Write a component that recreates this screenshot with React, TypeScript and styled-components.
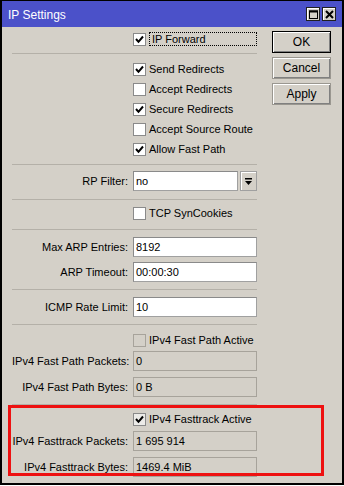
import React from 'react';
import styled, { createGlobalStyle } from 'styled-components';

const Global = createGlobalStyle`
  html, body {
    margin: 0;
    padding: 0;
    background: #ffffff;
  }
  body {
    font-family: "Liberation Sans", Arial, sans-serif;
    font-size: 11px;
    color: #000;
  }
`;

const Window = styled.div`
  position: relative;
  box-sizing: border-box;
  width: 344px;
  height: 485px;
  background: #d4d0c8;
  border: 2px solid #000;
  border-top-width: 1px;
  display: flex;
  flex-direction: column;
`;

const TitleBar = styled.div`
  height: 26px;
  background: #4b51c9;
  display: flex;
  align-items: center;
  padding: 0 6px 0 6px;
`;

const Title = styled.div`
  flex: 1;
  color: #fff;
  font-size: 12px;
  padding-top: 1px;
`;

const TitleButton = styled.div`
  box-sizing: border-box;
  width: 14px;
  height: 14px;
  margin-left: 2px;
  background: #d4d0c8;
  border: 1px solid #202020;
  box-shadow: inset 1px 1px #fff;
  display: flex;
  align-items: center;
  justify-content: center;
`;

const Body = styled.div`
  flex: 1;
  display: flex;
  padding: 0 10px 0 10px;
`;

const Form = styled.div`
  width: 245px;
  display: flex;
  flex-direction: column;
`;

const Section = styled.div<{ $pt: number; $pb: number; $gap?: number }>`
  display: flex;
  flex-direction: column;
  gap: ${p => p.$gap ?? 0}px;
  padding: ${p => p.$pt}px 0 ${p => p.$pb}px;
`;

const Separator = styled.div`
  height: 1px;
  background: #b4b0a8;
`;

const Row = styled.div<{ $h?: number }>`
  display: grid;
  grid-template-columns: 116px 124px;
  column-gap: 5px;
  align-items: center;
  height: ${p => p.$h ?? 20}px;
`;

const Label = styled.div`
  text-align: right;
  white-space: nowrap;
`;

const Field = styled.div<{ $readonly?: boolean }>`
  box-sizing: border-box;
  height: 20px;
  line-height: 18px;
  padding-left: 2px;
  background: ${p => (p.$readonly ? '#d4d0c8' : '#fff')};
  border: 1px solid ${p => (p.$readonly ? '#a7a39b' : '#a0a0a0')};
  ${p => (p.$readonly ? '' : 'border-top-color: #8a8a8a; border-left-color: #8a8a8a;')}
  white-space: nowrap;
`;

const Select = styled.div`
  display: flex;
  gap: 2px;
`;

const SelectButton = styled.div`
  box-sizing: border-box;
  width: 17px;
  height: 20px;
  background: #d4d0c8;
  border: 1px solid #a0a0a0;
  box-shadow: inset 1px 1px #fff;
  display: flex;
  align-items: center;
  justify-content: center;
`;

const Check = styled.label`
  grid-column: 2;
  display: flex;
  align-items: center;
  gap: 3px;
  white-space: nowrap;
`;

const Box = styled.span<{ $disabled?: boolean; $dim?: boolean }>`
  box-sizing: border-box;
  width: 13px;
  height: 13px;
  flex: none;
  background: ${p => (p.$disabled ? '#d4d0c8' : p.$dim ? '#ecebe8' : '#fff')};
  border: 1px solid ${p => (p.$disabled ? '#a7a39b' : '#8a8a8a')};
  display: flex;
  align-items: center;
  justify-content: center;
`;

const Focus = styled.span`
  box-sizing: border-box;
  width: 112px;
  height: 14px;
  line-height: 12px;
  padding-left: 2px;
  border: 1px dotted #000;
`;

const Buttons = styled.div`
  margin-left: 15px;
  padding-top: 4px;
  display: flex;
  flex-direction: column;
  gap: 4px;
`;

const Button = styled.div<{ $default?: boolean }>`
  box-sizing: border-box;
  width: 59px;
  height: 22px;
  display: flex;
  align-items: center;
  justify-content: center;
  font-size: 12px;
  border: 1px solid ${p => (p.$default ? '#000' : '#9a9790')};
  box-shadow: inset 1px 1px #fff, inset -1px -1px #808080;
`;

const Highlight = styled.div`
  position: absolute;
  left: 6px;
  top: 404px;
  width: 316px;
  height: 71px;
  box-sizing: border-box;
  border: 3px solid #ee1111;
  pointer-events: none;
`;

const Tick = () => (
  <svg width="9" height="9" viewBox="0 0 9 9">
    <polyline points="1,4 3.5,6.8 8,1.5" fill="none" stroke="#000" strokeWidth="2" />
  </svg>
);

const CheckRow: React.FC<{ label: string; checked?: boolean; disabled?: boolean; dim?: boolean }> = ({
  label,
  checked,
  disabled,
  dim,
}) => (
  <Row>
    <Check>
      <Box $disabled={disabled} $dim={dim}>{checked && <Tick />}</Box>
      {label}
    </Check>
  </Row>
);

const FieldRow: React.FC<{ label: string; value: string; readonly?: boolean }> = ({ label, value, readonly }) => (
  <Row>
    <Label>{label}</Label>
    <Field $readonly={readonly}>{value}</Field>
  </Row>
);

export default function App() {
  return (
    <>
      <Global />
      <Window>
        <TitleBar>
          <Title>IP Settings</Title>
          <TitleButton>
            <svg width="9" height="9" viewBox="0 0 9 9">
              <rect x="0.5" y="1" width="8" height="7.5" fill="none" stroke="#000" strokeWidth="1" />
              <rect x="0" y="0.5" width="9" height="2" fill="#000" />
            </svg>
          </TitleButton>
          <TitleButton>
            <svg width="9" height="9" viewBox="0 0 9 9">
              <path d="M1 1 L8 8 M8 1 L1 8" stroke="#000" strokeWidth="2" />
            </svg>
          </TitleButton>
        </TitleBar>
        <Body>
          <Form>
            <Section $pt={2} $pb={4}>
              <Row>
                <Check>
                  <Box>
                    <Tick />
                  </Box>
                  <Focus>IP Forward</Focus>
                </Check>
              </Row>
            </Section>
            <Separator />
            <Section $pt={5} $pb={5}>
              <CheckRow label="Send Redirects" checked />
              <CheckRow label="Accept Redirects" />
              <CheckRow label="Secure Redirects" checked />
              <CheckRow label="Accept Source Route" />
              <CheckRow label="Allow Fast Path" checked />
            </Section>
            <Separator />
            <Section $pt={6} $pb={8}>
              <Row>
                <Label>RP Filter:</Label>
                <Select>
                  <Field style={{ flex: 1 }}>no</Field>
                  <SelectButton>
                    <svg width="9" height="9" viewBox="0 0 9 9">
                      <rect x="1" y="1" width="7" height="1.5" fill="#000" />
                      <polygon points="1,4 8,4 4.5,8" fill="#000" />
                    </svg>
                  </SelectButton>
                </Select>
              </Row>
            </Section>
            <Separator />
            <Section $pt={3} $pb={6}>
              <CheckRow label="TCP SynCookies" />
            </Section>
            <Separator />
            <Section $pt={7} $pb={7} $gap={5}>
              <FieldRow label="Max ARP Entries:" value="8192" />
              <FieldRow label="ARP Timeout:" value="00:00:30" />
            </Section>
            <Separator />
            <Section $pt={7} $pb={7}>
              <FieldRow label="ICMP Rate Limit:" value="10" />
            </Section>
            <Separator />
            <Section $pt={5} $pb={7} $gap={1}>
              <CheckRow label="IPv4 Fast Path Active" disabled />
              <Section $pt={0} $pb={0} $gap={6}>
                <FieldRow label="IPv4 Fast Path Packets:" value="0" readonly />
                <FieldRow label="IPv4 Fast Path Bytes:" value="0 B" readonly />
              </Section>
            </Section>
            <Separator />
            <Section $pt={4} $pb={0} $gap={2}>
              <CheckRow label="IPv4 Fasttrack Active" checked dim />
              <Section $pt={0} $pb={0} $gap={6}>
                <FieldRow label="IPv4 Fasttrack Packets:" value="1 695 914" readonly />
                <FieldRow label="IPv4 Fasttrack Bytes:" value="1469.4 MiB" readonly />
              </Section>
            </Section>
          </Form>
          <Buttons>
            <Button $default>OK</Button>
            <Button>Cancel</Button>
            <Button>Apply</Button>
          </Buttons>
        </Body>
        <Highlight />
      </Window>
    </>
  );
}
